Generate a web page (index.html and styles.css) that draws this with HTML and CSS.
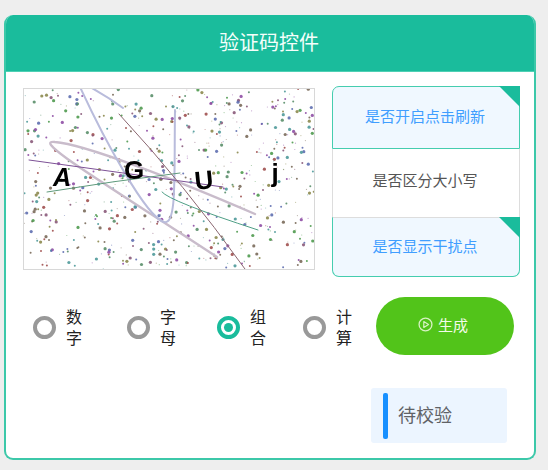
FILE: index.html
```html
<!DOCTYPE html>
<html lang="zh-CN">
<head>
    <meta charset="UTF-8">
    <meta name="viewport" content="width=device-width, initial-scale=1.0">
    <title>验证码控件</title>
    <link rel="stylesheet" href="styles.css">
</head>
<body>
    <div class="card">
        <div class="card-header">验证码控件</div>
        <div class="card-body">
            <div class="top-row">
                <div class="captcha">
                    <svg id="captcha" class="captcha-svg" viewBox="0 0 290 180" width="290" height="180">
                        <g id="dots"></g>
                        <g fill="none" stroke-linecap="round">
                            <path d="M193 168 C90 100 5 50 31 53 C60 55 150 90 231 125" stroke="#c9bccb" stroke-width="2.4"/>
                            <path d="M56 -2 C80 50 122 128 140 133 C153 136 150 90 151 21" stroke="#b9bcdc" stroke-width="2"/>
                            <path d="M66 -2 Q84 8 99 19" stroke="#b9bcdc" stroke-width="2"/>
                            <path d="M5 71 Q100 84 199 98" stroke="#7d5196" stroke-width="1"/>
                            <path d="M23 103 Q90 92 156 84" stroke="#5f9a7c" stroke-width="1"/>
                            <path d="M138 103 Q145 112 234 141" stroke="#4f9f86" stroke-width="1"/>
                            <path d="M95 25 Q160 95 221 180" stroke="#8a6670" stroke-width="1"/>
                        </g>
                        <text class="captcha-char" x="38" y="97" font-size="25" font-style="italic" text-anchor="middle">A</text>
                        <text class="captcha-char" x="110" y="90" font-size="26" text-anchor="middle">G</text>
                        <text class="captcha-char" x="180" y="100" font-size="26" text-anchor="middle" transform="rotate(-6 180 91)">U</text>
                        <text class="captcha-char" x="251" y="93" font-size="26" text-anchor="middle">j</text>
                    </svg>
                </div>
                <div class="options">
                    <div class="option option-first active">是否开启点击刷新</div>
                    <div class="option option-mid">是否区分大小写</div>
                    <div class="option option-last active">是否显示干扰点</div>
                </div>
            </div>
            <div class="control-row">
                <div class="radio-item radio-w1"><span class="radio"></span><span class="radio-label">数字</span></div>
                <div class="radio-item radio-w2"><span class="radio"></span><span class="radio-label">字母</span></div>
                <div class="radio-item radio-w3"><span class="radio checked"></span><span class="radio-label">组合</span></div>
                <div class="radio-item radio-w4"><span class="radio"></span><span class="radio-label">计算</span></div>
                <button class="gen-btn">
                    <svg viewBox="0 0 14 14" width="15" height="15">
                        <circle cx="7" cy="7" r="6" fill="none" stroke="#d8f2c4" stroke-width="1.2"/>
                        <path d="M5.4 4.2 L9.8 7 L5.4 9.8 Z" fill="none" stroke="#d8f2c4" stroke-width="1.1" stroke-linejoin="round"/>
                    </svg>
                    <span class="gen-text">生成</span>
                </button>
            </div>
            <div class="status-row">
                <div class="status"><span class="status-bar"></span><span class="status-text">待校验</span></div>
            </div>
        </div>
    </div>
    <script src="script.js"></script>
</body>
</html>
```
FILE: styles.css
```css
body {
    margin: 0;
    height: 470px;
    box-sizing: border-box;
    padding: 15px 12px 10px 4px;
    background-color: #eeeeee;
    font-family: "Noto Sans CJK SC", "Liberation Sans", sans-serif;
    overflow: hidden;
}

.card {
    height: 100%;
    box-sizing: border-box;
    border: 2px solid #3cc8a9;
    border-top: none;
    border-radius: 9px;
    background: white;
    display: flex;
    flex-direction: column;
    overflow: hidden;
}

.card-header {
    height: 57px;
    flex-shrink: 0;
    margin: 0 -2px;
    background-color: #1abc9c;
    border-bottom: 1px solid #4fd0b4;
    box-sizing: border-box;
    color: #f4fffb;
    font-size: 20px;
    display: flex;
    align-items: center;
    justify-content: center;
    padding: 0 2px 3px 0;
}

.card-body {
    flex: 1;
    display: flex;
    flex-direction: column;
}

.top-row {
    display: flex;
    padding: 14px 0 0 17px;
    gap: 17px;
}

.captcha {
    margin-top: 2px;
    width: 290px;
    height: 180px;
    border: 1px solid #d8d8d8;
    flex-shrink: 0;
}

.captcha-svg {
    display: block;
    overflow: hidden;
    filter: blur(0.35px);
}

.captcha-char {
    font-family: "Liberation Sans", sans-serif;
    font-weight: bold;
    fill: black;
}

.options {
    width: 188px;
    display: flex;
    flex-direction: column;
}

.option {
    position: relative;
    box-sizing: border-box;
    display: flex;
    align-items: center;
    justify-content: center;
    font-size: 15px;
}

.option.active {
    background: #f0f8ff;
    color: #409eff;
    border: 1.5px solid #45cdaf;
}

.option.active::after {
    content: "";
    position: absolute;
    top: -1px;
    right: -1px;
    width: 21px;
    height: 21px;
    background: #1abc9c;
    clip-path: polygon(0 0, 100% 0, 100% 100%);
}

.option-first {
    height: 63px;
    padding: 0 2px 4px 0;
    border-top-left-radius: 7px;
}

.option-mid {
    height: 68px;
    padding: 0 2px 8px 0;
    color: #555555;
    border-left: 1px solid #dddddd;
    border-right: 1px solid #dddddd;
}

.option-last {
    height: 60px;
    padding: 0 2px 4px 0;
    border-top-color: #dddddd !important;
    border-bottom-left-radius: 7px;
    border-bottom-right-radius: 7px;
}

.control-row {
    display: flex;
    align-items: center;
    margin-top: 20px;
    padding-left: 27px;
}

.radio-item {
    display: flex;
    align-items: center;
    gap: 10px;
    padding-top: 2px;
}

.radio-w1 { width: 94px; }
.radio-w2 { width: 90px; }
.radio-w3 { width: 86px; }
.radio-w4 { width: 73px; }

.radio {
    width: 23px;
    height: 23px;
    box-sizing: border-box;
    border: 4px solid #999999;
    border-radius: 50%;
    background: white;
    flex-shrink: 0;
    display: flex;
    align-items: center;
    justify-content: center;
}

.radio.checked {
    border-color: #1abc9c;
}

.radio.checked::after {
    content: "";
    width: 9px;
    height: 9px;
    border-radius: 50%;
    background: #1abc9c;
}

.radio-label {
    width: 16px;
    font-size: 16px;
    line-height: 21px;
    color: #222222;
}

.gen-btn {
    width: 138px;
    height: 58px;
    border: none;
    border-radius: 29px;
    background-color: #52c41a;
    color: #f2fbe9;
    font-family: inherit;
    font-size: 15px;
    display: flex;
    align-items: center;
    justify-content: center;
    gap: 5px;
    padding: 0 4px 3px 0;
}

.gen-text {
    margin-bottom: 1px;
}

.status-row {
    display: flex;
    justify-content: flex-end;
    margin-top: 33px;
    padding-right: 27px;
}

.status {
    width: 136px;
    height: 55px;
    box-sizing: border-box;
    padding-left: 12px;
    background: #ecf5ff;
    border-radius: 3px;
    color: #606266;
    font-size: 18px;
    display: flex;
    align-items: center;
    gap: 10px;
}

.status-text {
    margin-bottom: 4px;
}

.status-bar {
    width: 5px;
    height: 46px;
    border-radius: 2px;
    background: #1890ff;
}
```
FILE: script.js
```js
// noise dots for the captcha, seeded so they stay the same on every load
let seed = 20240;

function rand() {
    seed = (seed * 16807) % 2147483647;
    return seed / 2147483647;
}

const colors = ['#5a8f6a', '#8a5a7a', '#5f6fb0', '#8c8a4f', '#a0504f', '#4f9a9a', '#7a6a5a', '#8f4fa5', '#4f9a4f'];
const dots = document.getElementById('dots');

for (let i = 0; i < 700; i++) {
    const dot = document.createElementNS('http://www.w3.org/2000/svg', 'circle');
    const size = rand();
    dot.setAttribute('cx', (rand() * 290).toFixed(1));
    dot.setAttribute('cy', (rand() * 180).toFixed(1));
    dot.setAttribute('r', size < 0.35 ? 0.6 : size < 0.7 ? 1 : 1.6);
    dot.setAttribute('fill', colors[Math.floor(rand() * colors.length)]);
    dot.setAttribute('opacity', size < 0.35 ? 0.5 : 0.9);
    dots.appendChild(dot);
}
```
